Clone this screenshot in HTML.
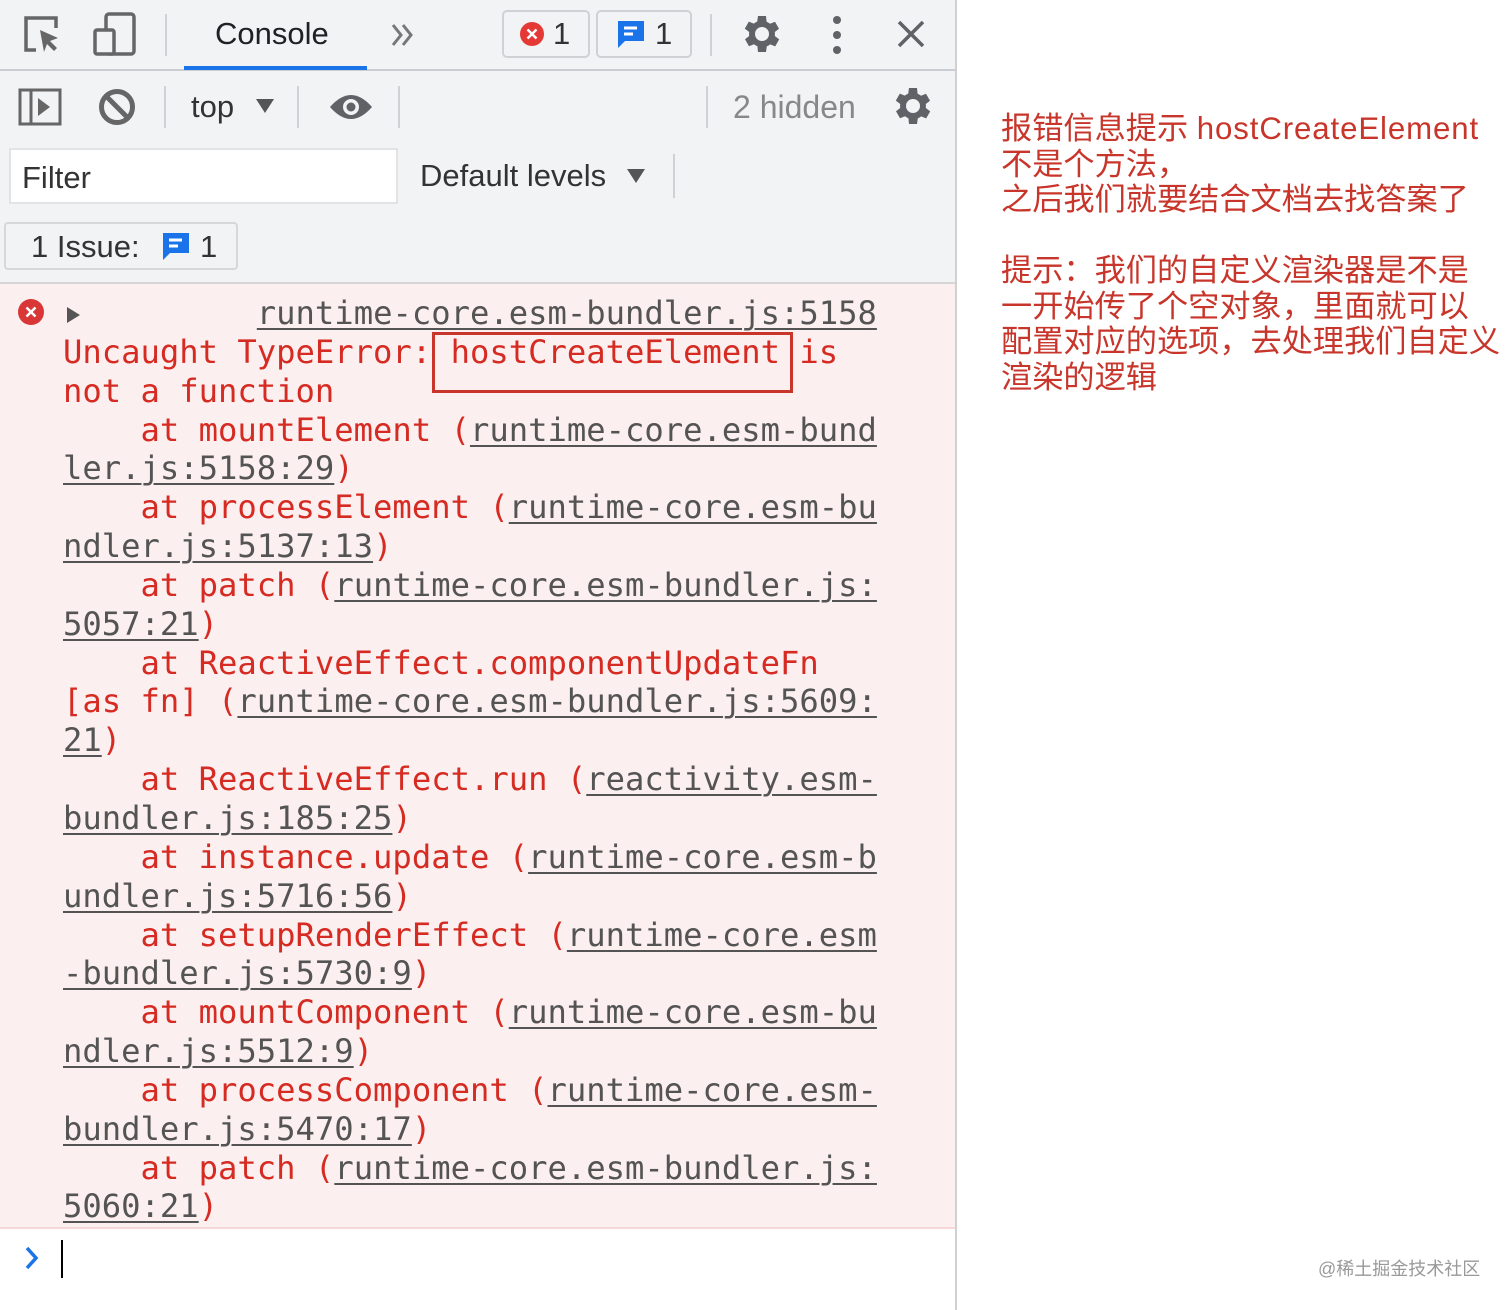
<!DOCTYPE html>
<html><head><meta charset="utf-8"><style>
*{margin:0;padding:0;box-sizing:border-box}
body{width:1512px;height:1310px;background:#fff;position:relative;overflow:hidden;font-family:"Liberation Sans",Arial,sans-serif}
.abs{position:absolute}
.tb{background:#f1f3f4;left:0;top:0;width:956px;height:284px}
.t{color:#333;font-size:31px;position:absolute}
.g{color:#777}
.sep{position:absolute;width:2px;background:#cfd1d4}
.mono{position:absolute;left:63px;top:294px;font-family:"DejaVu Sans Mono","Liberation Mono",monospace;font-size:32.2px;line-height:38.85px;color:#d52b22;white-space:pre}
.mono a{color:#545454;text-decoration:underline;text-decoration-thickness:2px;text-underline-offset:4px}
.cn{position:absolute;left:1001px;font-family:"Liberation Sans","Noto Sans CJK SC",sans-serif;font-size:31.2px;color:#c8352b;line-height:35.5px;white-space:pre}
.cn span{letter-spacing:0.6px}
</style></head><body>
<div class="abs tb"></div>
<div class="abs" style="left:0;top:69px;width:956px;height:2px;background:#cacdd1"></div>
<div class="abs" style="left:184px;top:66px;width:183px;height:4px;background:#1a73e8"></div>
<div class="abs" style="left:0;top:282px;width:956px;height:2px;background:#d6d6d6"></div>
<div class="abs" style="left:0;top:284px;width:956px;height:944px;background:#fcefef"></div>
<div class="abs" style="left:0;top:1227px;width:956px;height:2px;background:#f6d8d8"></div>
<div class="abs" style="left:955px;top:0;width:2px;height:1310px;background:#d0d0d0"></div>

<svg class="abs" style="left:22px;top:14px" width="44" height="42" viewBox="0 0 44 42"><path d="M14 4H4v32h10M4 4h30v10" fill="none" stroke="#666" stroke-width="3.5"/><path d="M18 16l18 8-8 3 7 7-3 3-7-7-3 8z" fill="#666"/></svg>
<svg class="abs" style="left:92px;top:12px" width="46" height="44" viewBox="0 0 46 44"><rect x="14" y="2" width="28" height="40" rx="3" fill="none" stroke="#666" stroke-width="3.5"/><rect x="3" y="18" width="19" height="24" rx="2" fill="#f1f3f4" stroke="#666" stroke-width="3.5"/></svg>
<div class="sep" style="left:165px;top:14px;height:42px"></div>
<div class="t" style="left:215px;top:16px;color:#202124">Console</div>
<svg class="abs" style="left:390px;top:22px" width="26" height="26"><path d="M3 3l8 10-8 10M13 3l8 10-8 10" fill="none" stroke="#777" stroke-width="3"/></svg>
<div class="abs" style="left:502px;top:10px;width:88px;height:48px;border:2px solid #cfd1d4;border-radius:5px"></div>
<svg class="abs" style="left:519px;top:21px" width="26" height="26"><circle cx="13" cy="13" r="12" fill="#e53935"/><path d="M8.5 8.5l9 9M17.5 8.5l-9 9" stroke="#fff" stroke-width="2.5"/></svg>
<div class="t" style="left:553px;top:16px">1</div>
<div class="abs" style="left:596px;top:10px;width:96px;height:48px;border:2px solid #cfd1d4;border-radius:5px"></div>
<svg class="abs" style="left:615px;top:18px" width="32" height="32"><path d="M3 3h26v20H10l-7 7z" fill="#1a73e8"/><path d="M9 10h13M9 16h9" stroke="#fff" stroke-width="3"/></svg>
<div class="t" style="left:655px;top:16px">1</div>
<div class="sep" style="left:710px;top:14px;height:42px"></div>
<svg class="abs" style="left:736px;top:10px" width="48" height="48" viewBox="0 0 24 24"><path fill="#5f6368" d="M19.4 13a7.5 7.5 0 000-2l2.1-1.6-2-3.5-2.5 1a7 7 0 00-1.7-1L15 3h-4l-.4 2.8a7 7 0 00-1.7 1l-2.5-1-2 3.5L6.6 11a7.5 7.5 0 000 2l-2.1 1.6 2 3.5 2.5-1a7 7 0 001.7 1L11 21h4l.4-2.8a7 7 0 001.7-1l2.5 1 2-3.5zM13 15.5a3.5 3.5 0 110-7 3.5 3.5 0 010 7z"/></svg>
<svg class="abs" style="left:830px;top:16px" width="14" height="40"><circle cx="7" cy="4" r="4" fill="#5f6368"/><circle cx="7" cy="19" r="4" fill="#5f6368"/><circle cx="7" cy="34" r="4" fill="#5f6368"/></svg>
<svg class="abs" style="left:896px;top:19px" width="30" height="30"><path d="M3 3l24 24M27 3L3 27" stroke="#5f6368" stroke-width="3.5"/></svg>

<svg class="abs" style="left:18px;top:88px" width="44" height="38"><rect x="2" y="2" width="40" height="34" fill="none" stroke="#666" stroke-width="3"/><path d="M13 2v34" stroke="#666" stroke-width="3"/><path d="M20 10l12 9-12 9z" fill="#666"/></svg>
<svg class="abs" style="left:98px;top:88px" width="38" height="38"><circle cx="19" cy="19" r="15.5" fill="none" stroke="#666" stroke-width="5"/><path d="M9 9l20 20" stroke="#666" stroke-width="5"/></svg>
<div class="sep" style="left:164px;top:86px;height:42px"></div>
<div class="t" style="left:191px;top:89px">top</div>
<svg class="abs" style="left:255px;top:98px" width="20" height="16"><path d="M1 1h18L10 15z" fill="#555"/></svg>
<div class="sep" style="left:297px;top:86px;height:42px"></div>
<svg class="abs" style="left:328px;top:90px" width="46" height="34"><path d="M2 17Q23-7 44 17Q23 41 2 17z" fill="#5f6368"/><circle cx="23" cy="17" r="8" fill="#f1f3f4"/><circle cx="23" cy="17" r="4.5" fill="#5f6368"/></svg>
<div class="sep" style="left:398px;top:86px;height:42px"></div>
<div class="sep" style="left:706px;top:86px;height:42px"></div>
<div class="t" style="left:733px;top:89px;color:#888;font-size:32px">2 hidden</div>
<svg class="abs" style="left:887px;top:82px" width="48" height="48" viewBox="0 0 24 24"><path fill="#5f6368" d="M19.4 13a7.5 7.5 0 000-2l2.1-1.6-2-3.5-2.5 1a7 7 0 00-1.7-1L15 3h-4l-.4 2.8a7 7 0 00-1.7 1l-2.5-1-2 3.5L6.6 11a7.5 7.5 0 000 2l-2.1 1.6 2 3.5 2.5-1a7 7 0 001.7 1L11 21h4l.4-2.8a7 7 0 001.7-1l2.5 1 2-3.5zM13 15.5a3.5 3.5 0 110-7 3.5 3.5 0 010 7z"/></svg>

<div class="abs" style="left:9px;top:148px;width:389px;height:56px;background:#fff;border:2px solid #e2e3e5"></div>
<div class="t" style="left:22px;top:160px">Filter</div>
<div class="t" style="left:420px;top:158px">Default levels</div>
<svg class="abs" style="left:626px;top:168px" width="20" height="16"><path d="M1 1h18L10 15z" fill="#555"/></svg>
<div class="sep" style="left:673px;top:154px;height:44px"></div>
<div class="abs" style="left:4px;top:222px;width:234px;height:48px;border:2px solid #d6d7d9;border-radius:4px"></div>
<div class="t" style="left:31px;top:229px">1 Issue:</div>
<svg class="abs" style="left:160px;top:230px" width="32" height="32"><path d="M3 3h26v20H10l-7 7z" fill="#1a73e8"/><path d="M9 10h13M9 16h9" stroke="#fff" stroke-width="3"/></svg>
<div class="t" style="left:200px;top:229px">1</div>

<svg class="abs" style="left:17px;top:298px" width="28" height="28"><circle cx="14" cy="14" r="13" fill="#d93737"/><path d="M9.5 9.5l9 9M18.5 9.5l-9 9" stroke="#fff" stroke-width="2.5"/></svg>
<svg class="abs" style="left:66px;top:306px" width="16" height="18"><path d="M1 1l13 8-13 8z" fill="#555"/></svg>
<div class="mono">          <a>runtime-core.esm-bundler.js:5158</a>
Uncaught TypeError: hostCreateElement is
not a function
    at mountElement (<a>runtime-core.esm-bund</a>
<a>ler.js:5158:29</a>)
    at processElement (<a>runtime-core.esm-bu</a>
<a>ndler.js:5137:13</a>)
    at patch (<a>runtime-core.esm-bundler.js:</a>
<a>5057:21</a>)
    at ReactiveEffect.componentUpdateFn
[as fn] (<a>runtime-core.esm-bundler.js:5609:</a>
<a>21</a>)
    at ReactiveEffect.run (<a>reactivity.esm-</a>
<a>bundler.js:185:25</a>)
    at instance.update (<a>runtime-core.esm-b</a>
<a>undler.js:5716:56</a>)
    at setupRenderEffect (<a>runtime-core.esm</a>
<a>-bundler.js:5730:9</a>)
    at mountComponent (<a>runtime-core.esm-bu</a>
<a>ndler.js:5512:9</a>)
    at processComponent (<a>runtime-core.esm-</a>
<a>bundler.js:5470:17</a>)
    at patch (<a>runtime-core.esm-bundler.js:</a>
<a>5060:21</a>)</div>
<div class="abs" style="left:432px;top:332px;width:361px;height:61px;border:3px solid #c8352b"></div>
<svg class="abs" style="left:24px;top:1246px" width="16" height="24"><path d="M3 2l9 10-9 10" fill="none" stroke="#1a73e8" stroke-width="3.5"/></svg>
<div class="abs" style="left:61px;top:1240px;width:2px;height:38px;background:#000"></div>

<div class="cn" style="top:111px">报错信息提示 <span style="letter-spacing:0.9px">hostCreateElement</span>
不是个方法，
之后我们就要结合文档去找答案了

提示：我们的自定义渲染器是不是
一开始传了个空对象，里面就可以
配置对应的选项，去处理我们自定义
渲染的逻辑</div>
<div class="abs" style="left:1318px;top:1255px;font-family:'Liberation Sans','Noto Sans CJK SC',sans-serif;font-size:18px;color:#999">@稀土掘金技术社区</div>
</body></html>
